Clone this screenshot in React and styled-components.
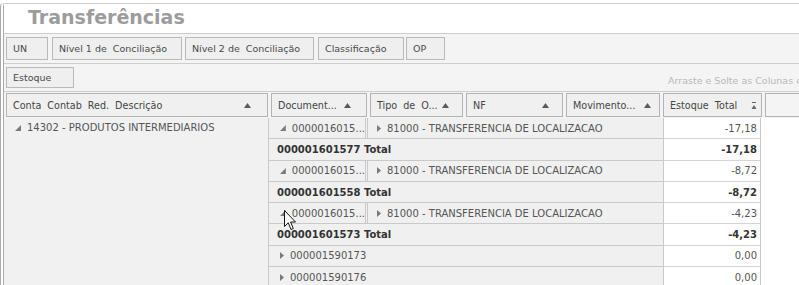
import React from 'react';
import styled, { createGlobalStyle } from 'styled-components';

const Global = createGlobalStyle`
  html, body { margin: 0; padding: 0; background: #fff; }
  body { width: 799px; height: 285px; overflow: hidden; font-family: "DejaVu Sans", "Liberation Sans", sans-serif; }
`;

const Root = styled.div`
  position: relative;
  width: 799px;
  height: 285px;
  overflow: hidden;
`;

const Window = styled.div`
  margin-top: 3px;
  border-left: 4px double #a9a9a9;
  border-top: 1px solid #cfcfcf;
  border-top-left-radius: 4px;
  height: 281px;
  overflow: hidden;
  background: #fff;
`;

const TitleBar = styled.div`
  height: 29px;
  border-bottom: 1px solid #cdcdcd;
  padding-left: 24px;
  display: flex;
  align-items: flex-start;
`;

const Title = styled.h1`
  margin: 0;
  padding-top: 1px;
  font-family: "DejaVu Sans", sans-serif;
  font-weight: bold;
  font-size: 19px;
  line-height: 24px;
  letter-spacing: 0px;
  color: #9c9c9c;
`;

const GroupBar = styled.div`
  height: ${p => p.$h}px;
  box-sizing: border-box;
  border-bottom: 1px solid #cdcdcd;
  background: #f4f4f4;
  display: flex;
  align-items: flex-start;
  padding: ${p => p.$pt}px 0 0 2px;
  position: relative;
  overflow: hidden;
`;

const GroupButton = styled.div`
  box-sizing: border-box;
  width: ${p => p.$w}px;
  height: ${p => p.$h || 23}px;
  margin-right: ${p => p.$mr || 0}px;
  border: 1px solid #b9b9b9;
  background: #efefef;
  color: #4a4a4a;
  font-size: 9.5px;
  display: flex;
  align-items: center;
  padding-left: 6px;
  white-space: pre;
`;

const HintArea = styled.div`
  flex: 1;
  align-self: center;
  padding: 3px 0 0 594px;
  overflow: hidden;
`;

const Hint = styled.div`
  font-size: 9.5px;
  color: #b8b8b8;
  white-space: nowrap;
`;

const HeaderRow = styled.div`
  height: 26px;
  box-sizing: border-box;
  background: #f4f4f4;
  display: flex;
  gap: 3px;
  padding: 1px 0 0 2px;
`;

const HeaderCell = styled.div`
  box-sizing: border-box;
  width: ${p => p.$w}px;
  flex: ${p => (p.$grow ? 1 : 'none')};
  height: 24px;
  border: 1px solid #b3b3b3;
  border-right: ${p => (p.$grow ? 'none' : '1px solid #b3b3b3')};
  background: ${p => (p.$grow ? '#f4f4f4' : '#f0f0f0')};
  color: #454545;
  font-size: 9.6px;
  word-spacing: 3px;
  display: flex;
  align-items: center;
  justify-content: space-between;
  gap: 4px;
  padding: 0 ${p => p.$pr || 12}px 0 6px;
  white-space: nowrap;
  & > svg { flex: none; }
  & > span { flex: none; }
`;

const Body = styled.div`
  display: flex;
`;

const LeftCol = styled.div`
  width: 265px;
  flex: none;
  background: #f1f1f1;
  border-right: 1px solid #c9c9c9;
  height: 175px;
  box-sizing: border-box;
  padding: 3px 0 0 11px;
  font-size: 10px;
  color: #555;
  display: flex;
  align-items: flex-start;
  gap: 6px;
  line-height: 13px;
`;

const ArrowWrap = styled.span`
  padding-top: 4px;
  display: flex;
`;

const Rows = styled.div`
  flex: 1;
  display: flex;
  flex-direction: column;
`;

const Row = styled.div`
  display: flex;
  height: 21.3px;
`;

const Main = styled.div`
  width: 394px;
  flex: none;
  box-sizing: border-box;
  border-bottom: 1px solid #c9c9c9;
  background: #f0f0f0;
  display: flex;
  font-size: 10px;
  color: ${p => (p.$bold ? '#333' : '#555')};
  font-weight: ${p => (p.$bold ? 'bold' : 'normal')};
`;

const DocCell = styled.div`
  box-sizing: border-box;
  width: ${p => (p.$full ? 'auto' : '97px')};
  flex: ${p => (p.$full ? 1 : 'none')};
  border-right: ${p => (p.$full ? 'none' : '1px solid #c9c9c9')};
  display: flex;
  align-items: center;
  gap: 6px;
  padding-left: ${p => (p.$pl != null ? p.$pl : 11)}px;
  white-space: nowrap;
`;

const TipoCell = styled.div`
  flex: 1;
  box-sizing: border-box;
  margin-left: 1px;
  border-left: 1px solid #c9c9c9;
  display: flex;
  align-items: center;
  gap: 6px;
  padding-left: 9px;
  white-space: nowrap;
`;

const ValueCell = styled.div`
  width: 98px;
  flex: none;
  box-sizing: border-box;
  border-left: 1px solid #c9c9c9;
  border-right: 1px solid #c9c9c9;
  border-bottom: 1px solid #d4d4d4;
  background: #fff;
  font-size: 10px;
  color: ${p => (p.$bold ? '#333' : '#555')};
  font-weight: ${p => (p.$bold ? 'bold' : 'normal')};
  display: flex;
  align-items: center;
  justify-content: flex-end;
  padding-right: 3px;
`;

const Cursor = styled.svg`
  position: absolute;
  left: 284px;
  top: 210px;
`;

const SortUp = () => (
  <svg width="7" height="5" viewBox="0 0 7 5"><path d="M3.5 0 L7 5 L0 5 Z" fill="#5a5a5a" /></svg>
);

const SortIcon = () => (
  <svg width="6" height="7" viewBox="0 0 6 7">
    <path d="M1 0.5 H5" stroke="#666" strokeWidth="1" />
    <path d="M3 3 L5.5 7 L0.5 7 Z" fill="#666" />
  </svg>
);

const Expanded = () => (
  <svg width="6" height="6" viewBox="0 0 6 6"><path d="M6 0 L6 6 L0 6 Z" fill="#7a7a7a" /></svg>
);

const Collapsed = () => (
  <svg width="4" height="7" viewBox="0 0 4 7"><path d="M0 0 L4 3.5 L0 7 Z" fill="#7a7a7a" /></svg>
);

const groups = [
  { label: 'UN', w: 42, mr: 4 },
  { label: 'Nível 1 de  Conciliação', w: 130, mr: 3 },
  { label: 'Nível 2 de  Conciliação', w: 129, mr: 4 },
  { label: 'Classificação', w: 86, mr: 2 },
  { label: 'OP', w: 39, mr: 0 },
];

const headers = [
  { label: 'Conta Contab Red. Descrição', w: 262, pr: 16 },
  { label: 'Document...', w: 96, pr: 15 },
  { label: 'Tipo de O...', w: 93, pr: 14 },
  { label: 'NF', w: 97, pr: 13 },
  { label: 'Movimento...', w: 94, pr: 8 },
];

const rows = [
  { type: 'detail', doc: '0000016015...', tipo: '81000 - TRANSFERENCIA DE LOCALIZACAO', value: '-17,18' },
  { type: 'total', doc: '000001601577 Total', value: '-17,18' },
  { type: 'detail', doc: '0000016015...', tipo: '81000 - TRANSFERENCIA DE LOCALIZACAO', value: '-8,72' },
  { type: 'total', doc: '000001601558 Total', value: '-8,72' },
  { type: 'detail', doc: '0000016015...', tipo: '81000 - TRANSFERENCIA DE LOCALIZACAO', value: '-4,23' },
  { type: 'total', doc: '000001601573 Total', value: '-4,23' },
  { type: 'leaf', doc: '000001590173', value: '0,00' },
  { type: 'leaf', doc: '000001590176', value: '0,00' },
];

function DataRow({ r }) {
  if (r.type === 'total') {
    return (
      <Row>
        <Main $bold>
          <DocCell $full $pl={8}>{r.doc}</DocCell>
        </Main>
        <ValueCell $bold>{r.value}</ValueCell>
      </Row>
    );
  }
  if (r.type === 'leaf') {
    return (
      <Row>
        <Main>
          <DocCell $full><Collapsed />{r.doc}</DocCell>
        </Main>
        <ValueCell>{r.value}</ValueCell>
      </Row>
    );
  }
  return (
    <Row>
      <Main>
        <DocCell><Expanded />{r.doc}</DocCell>
        <TipoCell><Collapsed />{r.tipo}</TipoCell>
      </Main>
      <ValueCell>{r.value}</ValueCell>
    </Row>
  );
}

export default function App() {
  return (
    <Root>
      <Global />
      <Window>
        <TitleBar>
          <Title>Transferências</Title>
        </TitleBar>
        <GroupBar $h={30} $pt={3}>
          {groups.map(g => (
            <GroupButton key={g.label} $w={g.w} $mr={g.mr}>{g.label}</GroupButton>
          ))}
        </GroupBar>
        <GroupBar $h={28} $pt={3}>
          <GroupButton $w={68} $h={21}>Estoque</GroupButton>
          <HintArea>
            <Hint>Arraste e Solte as Colunas de Dados Aqui</Hint>
          </HintArea>
        </GroupBar>
        <HeaderRow>
          {headers.map(h => (
            <HeaderCell key={h.label} $w={h.w} $pr={h.pr}>
              <span>{h.label}</span>
              <SortUp />
            </HeaderCell>
          ))}
          <HeaderCell $w={99} $pr={4}>
            <span>Estoque Total</span>
            <SortIcon />
          </HeaderCell>
          <HeaderCell $grow />
        </HeaderRow>
        <Body>
          <LeftCol>
            <ArrowWrap><Expanded /></ArrowWrap>
            <span>14302 - PRODUTOS INTERMEDIARIOS</span>
          </LeftCol>
          <Rows>
            {rows.map((r, i) => <DataRow key={i} r={r} />)}
          </Rows>
        </Body>
      </Window>
      <Cursor width="13" height="21" viewBox="0 0 13 21">
        <path d="M0.5 0.5 L0.5 16.5 L4.3 12.8 L7 19.5 L9.3 18.5 L6.6 12 L11.5 12 Z" fill="#fff" stroke="#111" strokeWidth="1" strokeLinejoin="round" />
      </Cursor>
    </Root>
  );
}
